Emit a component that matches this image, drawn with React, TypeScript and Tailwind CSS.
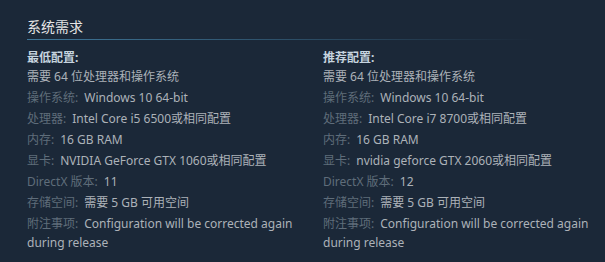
const minimum = [
  { label: "", value: "需要 64 位处理器和操作系统" },
  { label: "操作系统:", value: "Windows 10 64-bit" },
  { label: "处理器:", value: "Intel Core i5 6500或相同配置" },
  { label: "内存:", value: "16 GB RAM" },
  { label: "显卡:", value: "NVIDIA GeForce GTX 1060或相同配置" },
  { label: "DirectX 版本:", value: "11" },
  { label: "存储空间:", value: "需要 5 GB 可用空间" },
  { label: "附注事项:", value: "Configuration will be corrected again during release" },
];

const recommended = [
  { label: "", value: "需要 64 位处理器和操作系统" },
  { label: "操作系统:", value: "Windows 10 64-bit" },
  { label: "处理器:", value: "Intel Core i7 8700或相同配置" },
  { label: "内存:", value: "16 GB RAM" },
  { label: "显卡:", value: "nvidia geforce GTX 2060或相同配置" },
  { label: "DirectX 版本:", value: "12" },
  { label: "存储空间:", value: "需要 5 GB 可用空间" },
  { label: "附注事项:", value: "Configuration will be corrected again during release" },
];

function Column({ title, rows }: { title: string; rows: { label: string; value: string }[] }) {
  return (
    <div>
      <div className="text-[12px] leading-[19px] text-[#c6d4df] font-bold">{title}</div>
      <ul>
        {rows.map((r, i) => (
          <li key={i} className="text-[12px] leading-[19px] mb-[2px] text-[#acb2b8]">
            {r.label && <span className="text-[#5f6d7a] mr-[6px]">{r.label}</span>}
            {r.value}
          </li>
        ))}
      </ul>
    </div>
  );
}

export default function App() {
  return (
    <div
      className="w-[605px] h-[262px] bg-[#1b2838] pl-[27px] pr-[12px] pt-[17px] overflow-hidden"
      style={{ fontFamily: '"Noto Sans", "Noto Sans CJK SC", sans-serif' }}
    >
      <div className="text-[14px] leading-[20px] text-[#e5e5e5] pb-[2px] relative">
        系统需求
        <div className="absolute left-0 right-0 -bottom-px h-px bg-gradient-to-r from-[#3f7799] from-0% to-transparent to-90%" />
      </div>
      <div className="grid grid-cols-[296px_1fr] mt-[9px]">
        <div className="pr-[16px]">
          <Column title="最低配置:" rows={minimum} />
        </div>
        <Column title="推荐配置:" rows={recommended} />
      </div>
    </div>
  );
}
